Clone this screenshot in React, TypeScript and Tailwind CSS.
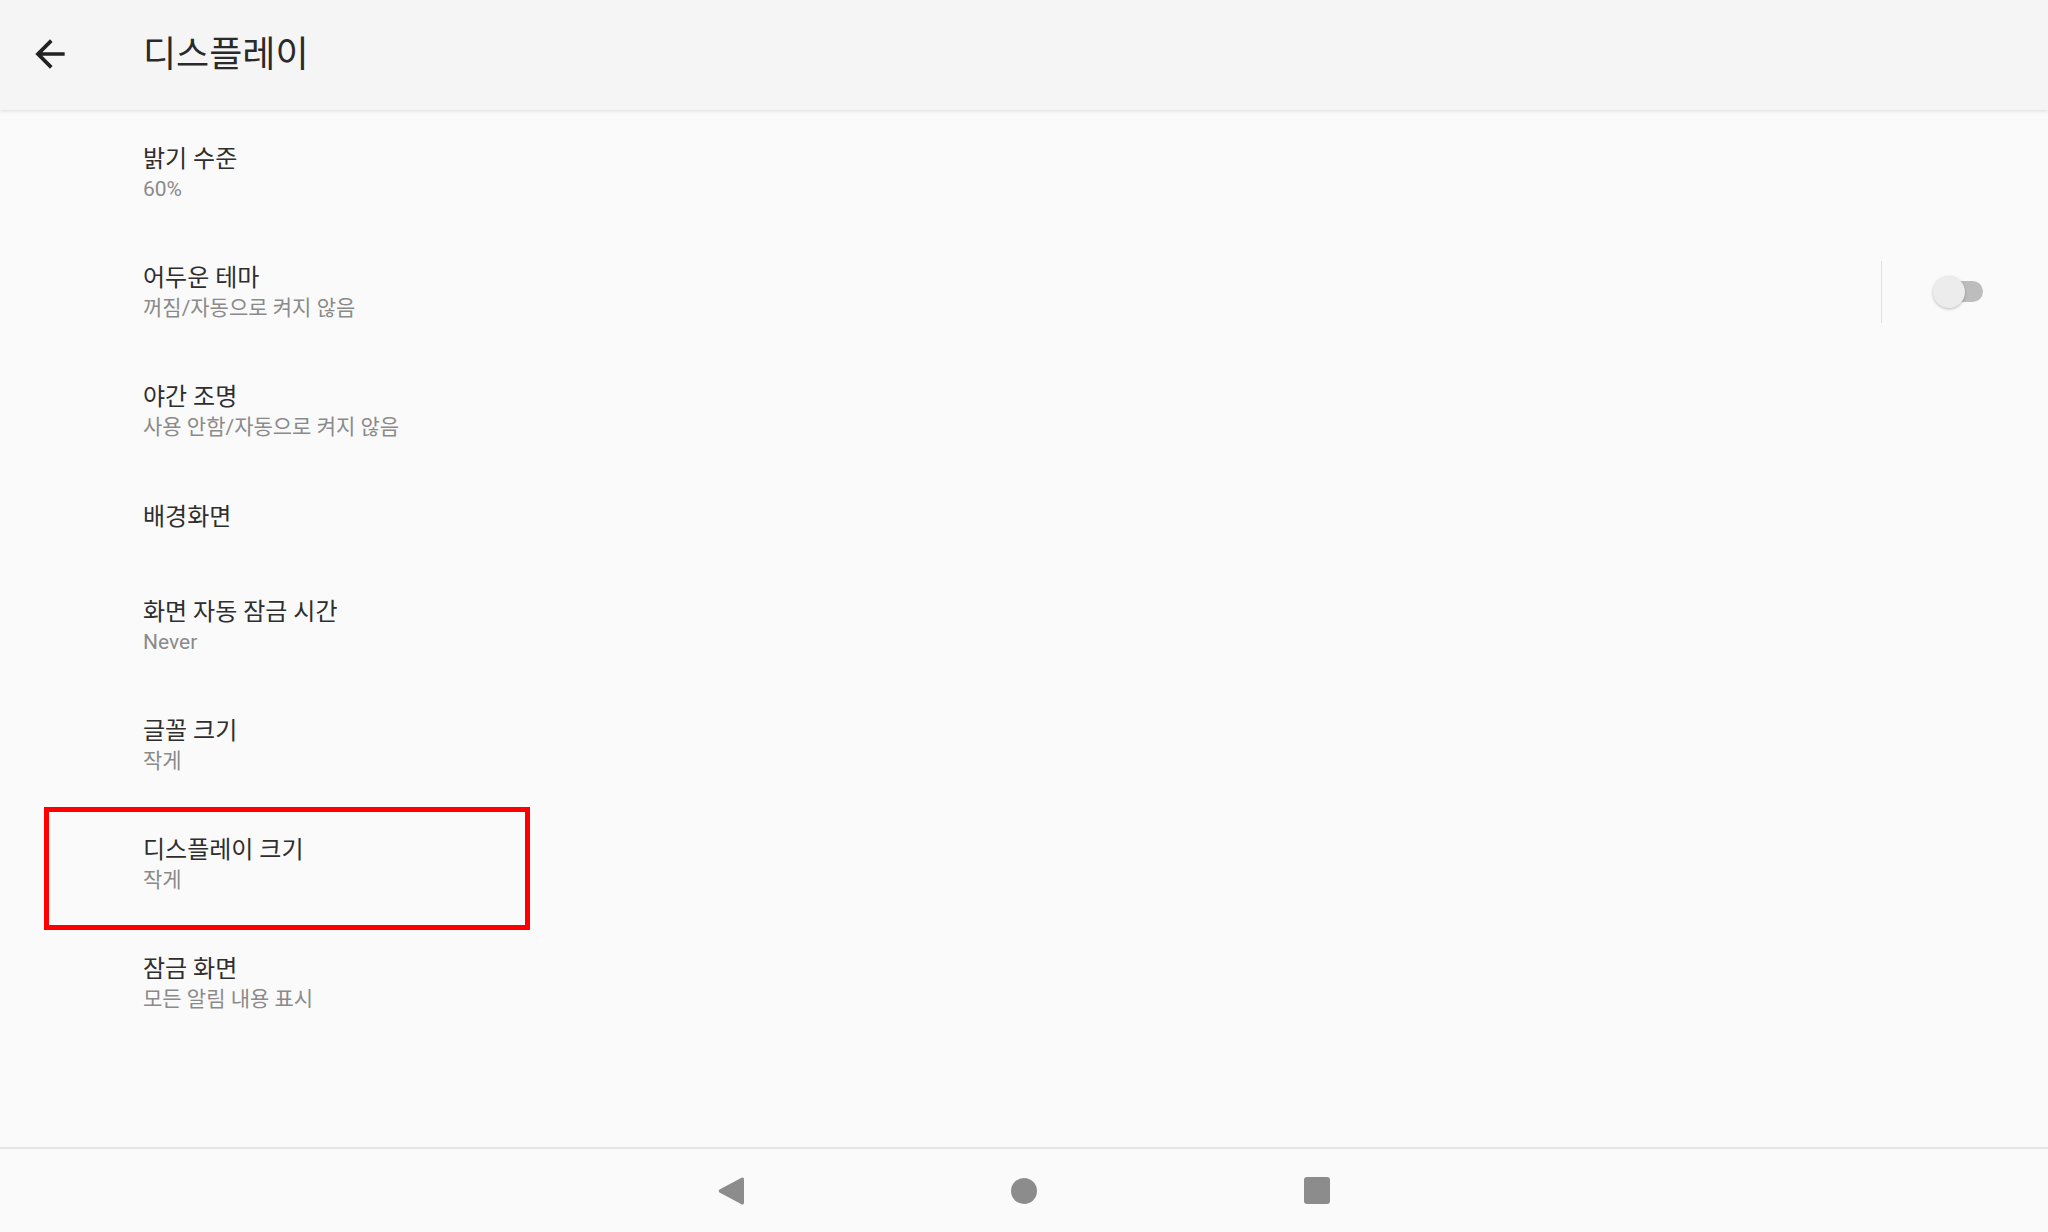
import React from "react";

type Item = { title: string; subtitle?: string; toggle?: boolean; highlight?: boolean };

const items: Item[] = [
  { title: "밝기 수준", subtitle: "60%" },
  { title: "어두운 테마", subtitle: "꺼짐/자동으로 켜지 않음", toggle: true },
  { title: "야간 조명", subtitle: "사용 안함/자동으로 켜지 않음" },
  { title: "배경화면" },
  { title: "화면 자동 잠금 시간", subtitle: "Never" },
  { title: "글꼴 크기", subtitle: "작게" },
  { title: "디스플레이 크기", subtitle: "작게", highlight: true },
  { title: "잠금 화면", subtitle: "모든 알림 내용 표시" },
];

function Row({ item }: { item: Item }) {
  return (
    <div
      className={
        "relative flex items-center pl-[143px] " + (item.subtitle ? "h-[119px]" : "h-[96px]")
      }
    >
      <div className={"flex flex-col flex-1 " + (item.subtitle ? "pt-[4px]" : "")}>
        <div className="text-[24px] leading-[32px] text-[#2e2e2e]">{item.title}</div>
        {item.subtitle && (
          <div className="text-[21px] leading-[29px] text-[#8a8a8a]">{item.subtitle}</div>
        )}
      </div>
      {item.toggle && (
        <div className="flex items-center h-full pt-[2px]">
          <div className="w-px h-[62px] bg-[#e0e0e0]" />
          <div className="relative ml-[51px] mr-[65px] w-[50px] h-[32px] flex items-center">
            <div className="absolute right-0 w-[48px] h-[21px] rounded-full bg-[#bdbdbd]" />
            <div className="absolute left-0 w-[32px] h-[32px] rounded-full bg-[#ececec] shadow-[0_1px_3px_rgba(0,0,0,0.25)]" />
          </div>
        </div>
      )}
      {item.highlight && (
        <div className="absolute left-[44px] top-[4px] w-[486px] h-[123px] border-[5px] border-[#ff0000]" />
      )}
    </div>
  );
}

export default function App() {
  return (
    <div
      className="w-[2048px] h-[1232px] flex flex-col bg-[#fafafa] overflow-hidden"
      style={{ fontFamily: '"Roboto", "Noto Sans CJK KR", sans-serif' }}
    >
      <header className="relative z-10 h-[110px] shrink-0 flex items-center bg-[#f5f5f5] shadow-[0_1px_3px_rgba(0,0,0,0.12)]">
        <svg className="ml-[28px] mt-[-2px]" width="44" height="44" viewBox="0 0 24 24" fill="#222">
          <path d="M20 11H7.83l5.59-5.59L12 4l-8 8 8 8 1.41-1.41L7.83 13H20v-2z" />
        </svg>
        <div className="ml-[71px] text-[36px] leading-[44px] text-[#2a2a2a]">디스플레이</div>
      </header>
      <main className="flex-1 flex flex-col pt-[2px]">
        {items.map((it) => (
          <Row key={it.title} item={it} />
        ))}
      </main>
      <nav className="h-[85px] shrink-0 border-t-2 border-[#e6e6e6] bg-[#fafafa] flex items-center justify-center gap-[267px]">
        <svg width="26" height="28" viewBox="0 0 26 28">
          <path d="M23.5 0.8 Q26 -0.2 26 2.5 L26 25.5 Q26 28.2 23.5 27.2 L1.5 15.5 Q0 14 1.5 12.5 Z" fill="#8c8c8c" />
        </svg>
        <div className="w-[26px] h-[26px] rounded-full bg-[#8c8c8c]" />
        <div className="w-[26px] h-[27px] rounded-[3px] bg-[#8c8c8c]" />
      </nav>
    </div>
  );
}
